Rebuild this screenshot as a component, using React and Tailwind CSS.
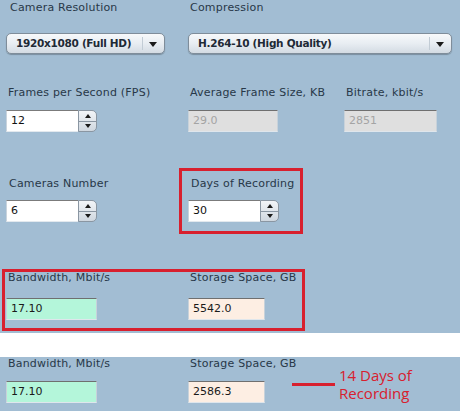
import React from "react";

const font = { fontFamily: "Verdana, 'DejaVu Sans', sans-serif" };

function Label({ children, className = "" }) {
  return (
    <div className={"text-[11px] leading-[13px] text-[#283848] tracking-[0.2px] " + className}>{children}</div>
  );
}

function Select({ value, width, dividerRight }) {
  return (
    <div
      className={"relative h-[21px] rounded-[5px] border border-[#7f8d9a] bg-gradient-to-b from-[#f7f9fb] via-[#e8edf2] to-[#d3dbe3] shadow-[0_1px_1px_rgba(0,0,0,0.25)] flex items-center " + width}
    >
      <span className="pl-[9px] text-[10.5px] tracking-[-0.3px] font-bold text-[#1e2a36]">{value}</span>
      <span className={"absolute top-[3px] bottom-[3px] w-px bg-[#c2ccd5] " + dividerRight} />
      <span className="absolute right-[7px] top-[8px] w-0 h-0 border-l-[4px] border-r-[4px] border-t-[5px] border-l-transparent border-r-transparent border-t-[#1a1a1a]" />
    </div>
  );
}

function Spinner() {
  return (
    <div className="w-[19px] h-[22px] rounded-r-[5px] border border-[#8a96a2] bg-gradient-to-b from-[#f2f5f8] to-[#cfd7df] flex flex-col">
      <div className="flex-1 flex items-center justify-center border-b border-[#8a96a2]">
        <span className="w-0 h-0 border-l-[3.5px] border-r-[3.5px] border-b-[4px] border-l-transparent border-r-transparent border-b-[#1a1a1a]" />
      </div>
      <div className="flex-1 flex items-center justify-center">
        <span className="w-0 h-0 border-l-[3.5px] border-r-[3.5px] border-t-[4px] border-l-transparent border-r-transparent border-t-[#1a1a1a]" />
      </div>
    </div>
  );
}

function NumInput({ value }) {
  return (
    <div className="flex">
      <div className="w-[72px] h-[22px] bg-white border-t border-t-[#7b7b7b] border-l border-l-[#c9d3dc] border-b border-b-[#e3e9ee] flex items-center pl-[4px] text-[11px] text-[#111]">
        {value}
      </div>
      <Spinner />
    </div>
  );
}

function Field({ value, width, bg, color = "text-[#1a1a1a]" }) {
  return (
    <div
      className={"h-[22px] border-t border-t-[#6f6f6f] border-l border-l-[#c8d2da] border-r border-r-[#c8d2da] border-b border-b-[#dfe6ec] flex items-center pl-[4px] text-[11px] " + width + " " + bg + " " + color}
    >
      {value}
    </div>
  );
}

export default function App() {
  return (
    <div className="w-[460px] h-[411px] bg-white overflow-hidden" style={font}>
      <div className="h-[333px] bg-[#a2bdd3] relative">
        {/* Row 1 */}
        <div className="flex pt-px">
          <div className="w-[188px] pl-[10px]">
            <Label>Camera Resolution</Label>
          </div>
          <div className="pl-[2px]">
            <Label>Compression</Label>
          </div>
        </div>
        <div className="flex pt-[19px] pl-[6px]">
          <Select value="1920x1080 (Full HD)" width="w-[159px]" dividerRight="right-[21px]" />
          <div className="w-[23px]" />
          <Select value="H.264-10 (High Quality)" width="w-[264px]" dividerRight="right-[21px]" />
        </div>

        {/* Row 2 */}
        <div className="flex pt-[32px]">
          <div className="w-[188px] pl-[8px]">
            <Label>Frames per Second (FPS)</Label>
          </div>
          <div className="w-[156px] pl-[2px]">
            <Label>Average Frame Size, KB</Label>
          </div>
          <div className="pl-[2px]">
            <Label>Bitrate, kbit/s</Label>
          </div>
        </div>
        <div className="flex pt-[11px] pl-[6px]">
          <div className="w-[182px]">
            <NumInput value="12" />
          </div>
          <div className="w-[156px]">
            <Field value="29.0" width="w-[90px]" bg="bg-[#dfdfdf]" color="text-[#a4a4a4]" />
          </div>
          <Field value="2851" width="w-[93px]" bg="bg-[#dfdfdf]" color="text-[#a4a4a4]" />
        </div>

        {/* Row 3 */}
        <div className="flex pt-[36px] pl-[6px]">
          <div className="w-[173px] pt-[9px]">
            <div className="pl-[3px]">
              <Label>Cameras Number</Label>
            </div>
            <div className="pt-[10px]">
              <NumInput value="6" />
            </div>
          </div>
          <div className="w-[124px] h-[66px] border-[3px] border-[#d8202e] pl-[6px] pt-[6px]">
            <div className="pl-[3px]">
              <Label>Days of Recording</Label>
            </div>
            <div className="pt-[10px]">
              <NumInput value="30" />
            </div>
          </div>
        </div>

        {/* Row 4 */}
        <div className="pt-[35px] pl-[2px]">
          <div className="w-[303px] h-[62px] border-[3px] border-[#d8202e] pl-px">
            <div className="flex -mt-px">
              <div className="w-[182px] pl-[2px]">
                <Label>Bandwidth, Mbit/s</Label>
              </div>
              <div className="pl-[2px]">
                <Label>Storage Space, GB</Label>
              </div>
            </div>
            <div className="flex pt-[14px]">
              <div className="w-[182px]">
                <Field value="17.10" width="w-[91px]" bg="bg-[#b4f6da]" />
              </div>
              <Field value="5542.0" width="w-[77px]" bg="bg-[#fdeee3]" />
            </div>
          </div>
        </div>
      </div>

      <div className="h-[24px] bg-white" />

      <div className="h-[54px] bg-[#a2bdd3] relative">
        <div className="flex">
          <div className="w-[188px] pl-[8px]">
            <Label>Bandwidth, Mbit/s</Label>
          </div>
          <div className="pl-[2px]">
            <Label>Storage Space, GB</Label>
          </div>
        </div>
        <div className="flex pt-[11px] pl-[6px] items-start">
          <div className="w-[182px]">
            <Field value="17.10" width="w-[91px]" bg="bg-[#b4f6da]" />
          </div>
          <Field value="2586.3" width="w-[77px]" bg="bg-[#fdeee3]" />
          <div className="w-[27px]" />
          <div className="w-[43px] h-[3px] bg-[#d8202e] mt-[2px]" />
          <div
            className="pl-[4px] -mt-[15px] text-[15px] leading-[18px] text-[#d8202e]"
            style={{ fontFamily: "'Open Sans', 'Noto Sans', sans-serif" }}
          >
            14 Days of
            <br />
            Recording
          </div>
        </div>
      </div>
    </div>
  );
}
